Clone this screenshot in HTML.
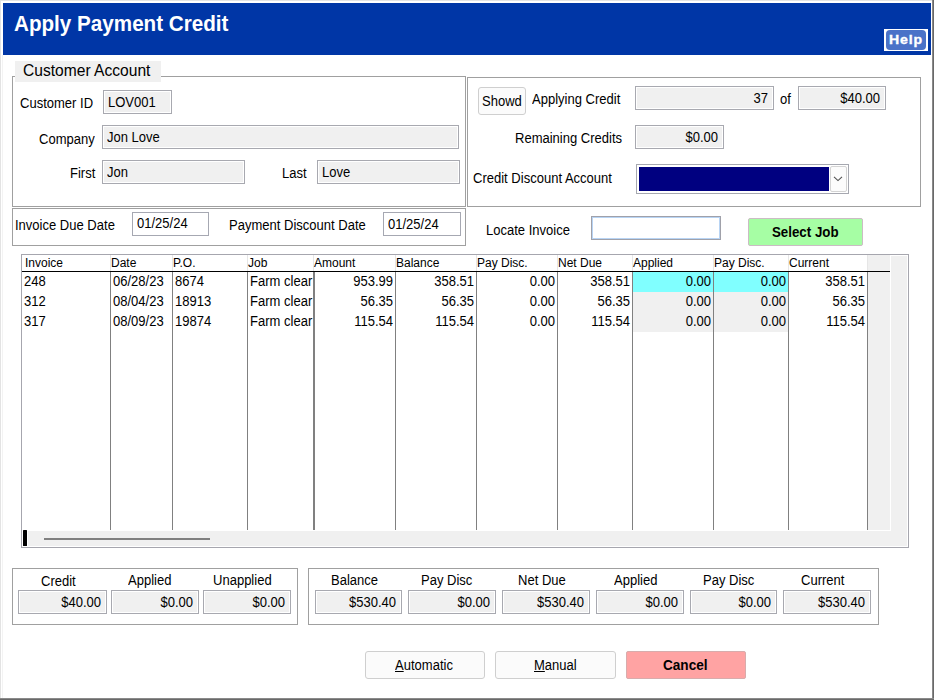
<!DOCTYPE html>
<html><head><meta charset="utf-8">
<style>
*{margin:0;padding:0;box-sizing:border-box}
html,body{width:934px;height:700px;overflow:hidden;background:#fff}
body{position:relative;font-family:"Liberation Sans",sans-serif;font-size:13px;color:#000}
.a{position:absolute}
.t{position:absolute;white-space:nowrap;line-height:15px;font-size:14px;transform:scaleX(0.93);transform-origin:0 0}
.r{text-align:right;transform-origin:100% 0}
.box{position:absolute;border:1px solid #a0a0a0}
.fld{position:absolute;background:#f0f0f0;border:1px solid #a8a9b0;box-shadow:inset 0 0 0 1px #fff}
.fw{position:absolute;background:#fff;border:1px solid #a6a8b2}
.btn{position:absolute;border:1px solid #cfcfcf;border-radius:3px;background:#fbfbfb}
.vl{position:absolute;width:1px;background:#808080}
.hl{position:absolute;width:1px;background:#d8d8d8}
.gh{position:absolute;white-space:nowrap;line-height:15px;font-size:12px}
</style></head>
<body>
<!-- outer frame -->
<div class="a" style="left:0;top:0;width:934px;height:1px;background:#e3e3e3"></div>
<div class="a" style="left:0;top:0;width:1px;height:700px;background:#e3e3e3"></div>
<div class="a" style="left:2px;top:55px;width:1px;height:643px;background:#f3f3f3"></div>
<div class="a" style="left:932px;top:0;width:1px;height:700px;background:#8a8a8a"></div>
<div class="a" style="left:933px;top:0;width:1px;height:700px;background:#696969"></div>
<div class="a" style="left:0;top:698px;width:934px;height:1px;background:#8a8a8a"></div>
<div class="a" style="left:0;top:699px;width:934px;height:1px;background:#696969"></div>

<!-- header -->
<div class="a" style="left:3px;top:3px;width:928px;height:52px;background:#0036a6"></div>
<div class="a" style="left:14px;top:11.6px;font-size:21.5px;font-weight:bold;color:#fff;line-height:24px;white-space:nowrap;transform:scaleX(0.96);transform-origin:0 0">Apply Payment Credit</div>
<div class="a" style="left:884px;top:29px;width:44px;height:22px;background:#fff"></div>
<div class="a" style="left:886px;top:30px;width:40px;height:20px;background:#4a72c8;border-radius:4px"></div>
<div class="t" style="left:888.5px;top:31.6px;font-weight:bold;color:#fff;letter-spacing:0.8px;font-size:13px;-webkit-text-stroke:0.35px #fff;transform:scaleX(1.08)">Help</div>

<!-- customer account group -->
<div class="box" style="left:12px;top:76px;width:454px;height:131px"></div>
<div class="a" style="left:15px;top:61px;width:146px;height:21px;background:#f0f0f0"></div>
<div class="t" style="left:23px;top:61px;font-size:16.5px;line-height:18px;transform:scaleX(0.945)">Customer Account</div>

<div class="t" style="left:20px;top:96px">Customer ID</div>
<div class="fld" style="left:103px;top:90px;width:69px;height:24px"></div>
<div class="t" style="left:108px;top:95px">LOV001</div>

<div class="t" style="left:39px;top:132px">Company</div>
<div class="fld" style="left:102px;top:125px;width:357px;height:24px"></div>
<div class="t" style="left:107px;top:130px">Jon Love</div>

<div class="t" style="left:70px;top:166px">First</div>
<div class="fld" style="left:102px;top:160px;width:143px;height:24px"></div>
<div class="t" style="left:107px;top:165px">Jon</div>

<div class="t" style="left:282px;top:166px">Last</div>
<div class="fld" style="left:317px;top:160px;width:143px;height:24px"></div>
<div class="t" style="left:322px;top:165px">Love</div>

<!-- dates group -->
<div class="box" style="left:12px;top:208px;width:454px;height:38px"></div>
<div class="t" style="left:15px;top:218px">Invoice Due Date</div>
<div class="fw" style="left:132px;top:212px;width:77px;height:24px"></div>
<div class="t" style="left:137px;top:216px">01/25/24</div>
<div class="t" style="left:229px;top:218px">Payment Discount Date</div>
<div class="fw" style="left:383px;top:212px;width:78px;height:24px"></div>
<div class="t" style="left:388px;top:217px">01/25/24</div>

<!-- right group -->
<div class="box" style="left:467px;top:77px;width:454px;height:130px"></div>
<div class="btn" style="left:478px;top:87px;width:48px;height:28px"></div>
<div class="t" style="left:482px;top:94px">Showd</div>
<div class="t" style="left:532px;top:92px">Applying Credit</div>
<div class="fld" style="left:635px;top:86px;width:139px;height:24px"></div>
<div class="t r" style="left:640px;top:91px;width:128px">37</div>
<div class="t" style="left:780px;top:92px">of</div>
<div class="fld" style="left:798px;top:86px;width:88px;height:24px"></div>
<div class="t r" style="left:800px;top:91px;width:80px">$40.00</div>
<div class="t" style="left:515px;top:131px">Remaining Credits</div>
<div class="fld" style="left:635px;top:125px;width:89px;height:24px"></div>
<div class="t r" style="left:640px;top:130px;width:78px">$0.00</div>
<div class="t" style="left:473px;top:171px">Credit Discount Account</div>
<div class="a" style="left:636px;top:164px;width:213px;height:30px;border:1px solid #a6a8b0;background:#fff"></div>
<div class="a" style="left:639px;top:167px;width:190px;height:24px;background:#000080"></div>
<div class="a" style="left:830px;top:166px;width:17px;height:26px;border:1px solid #d4d4d4;border-radius:2px;background:#fcfcfc"></div>
<svg class="a" style="left:833px;top:175px" width="11" height="8" viewBox="0 0 11 8"><path d="M1 1.8 L5 5.6 L9 1.8" fill="none" stroke="#505050" stroke-width="1.1"/></svg>

<!-- locate -->
<div class="t" style="left:486px;top:223px">Locate Invoice</div>
<div class="a" style="left:591px;top:216px;width:130px;height:24px;border:1px solid #a0a1aa;background:#fff"></div>
<div class="a" style="left:592px;top:217px;width:128px;height:22px;border:1px solid #b8d4f4"></div>
<div class="a" style="left:748px;top:218px;width:115px;height:28px;border:1px solid #cbbcc4;border-radius:2px;background:#a6fea4"></div>
<div class="t" style="left:772px;top:225px;font-weight:bold;font-size:14px;transform:scaleX(0.95)">Select Job</div>

<!-- grid -->
<div class="a" style="left:21px;top:254px;width:888px;height:294px;border:1px solid #a6a6ae;background:#fff"></div>
<div class="a" style="left:867px;top:255px;width:23px;height:275px;background:#f0f0f0"></div>
<div class="a" style="left:891px;top:256px;width:16px;height:290px;background:#f0f0f0"></div>
<div class="a" style="left:28px;top:531px;width:879px;height:15px;background:#f0f0f0"></div>
<div class="a" style="left:23px;top:530px;width:4px;height:16px;background:#000;border-radius:0.5px"></div>
<div class="a" style="left:44px;top:538px;width:166px;height:2px;background:#808080"></div>
<div class="a" style="left:633px;top:272px;width:80px;height:20px;background:#80ffff"></div>
<div class="a" style="left:633px;top:292px;width:80px;height:40px;background:#f0f0f0"></div>
<div class="a" style="left:714px;top:272px;width:74px;height:20px;background:#80ffff"></div>
<div class="a" style="left:714px;top:292px;width:74px;height:40px;background:#f0f0f0"></div>
<div class="a" style="left:110px;top:255px;width:1px;height:16px;background:#e6e6e6"></div>
<div class="a" style="left:172px;top:255px;width:1px;height:16px;background:#e6e6e6"></div>
<div class="a" style="left:247px;top:255px;width:1px;height:16px;background:#e6e6e6"></div>
<div class="a" style="left:313px;top:255px;width:1px;height:16px;background:#e6e6e6"></div>
<div class="a" style="left:395px;top:255px;width:1px;height:16px;background:#e6e6e6"></div>
<div class="a" style="left:476px;top:255px;width:1px;height:16px;background:#e6e6e6"></div>
<div class="a" style="left:557px;top:255px;width:1px;height:16px;background:#e6e6e6"></div>
<div class="a" style="left:632px;top:255px;width:1px;height:16px;background:#e6e6e6"></div>
<div class="a" style="left:713px;top:255px;width:1px;height:16px;background:#e6e6e6"></div>
<div class="a" style="left:788px;top:255px;width:1px;height:16px;background:#e6e6e6"></div>
<div class="a" style="left:867px;top:255px;width:1px;height:16px;background:#e6e6e6"></div>
<div class="a" style="left:22px;top:271px;width:868px;height:1px;background:#000"></div>
<div class="a" style="left:110px;top:272px;width:1px;height:258px;background:#808080"></div>
<div class="a" style="left:172px;top:272px;width:1px;height:258px;background:#808080"></div>
<div class="a" style="left:247px;top:272px;width:1px;height:258px;background:#808080"></div>
<div class="a" style="left:313px;top:272px;width:2px;height:258px;background:#808080"></div>
<div class="a" style="left:395px;top:272px;width:1px;height:258px;background:#808080"></div>
<div class="a" style="left:476px;top:272px;width:1px;height:258px;background:#808080"></div>
<div class="a" style="left:557px;top:272px;width:1px;height:258px;background:#808080"></div>
<div class="a" style="left:632px;top:272px;width:1px;height:258px;background:#808080"></div>
<div class="a" style="left:713px;top:272px;width:1px;height:258px;background:#808080"></div>
<div class="a" style="left:788px;top:272px;width:1px;height:258px;background:#808080"></div>
<div class="a" style="left:867px;top:272px;width:1px;height:258px;background:#808080"></div>
<div class="gh" style="left:25px;top:256px">Invoice</div>
<div class="gh" style="left:111px;top:256px">Date</div>
<div class="gh" style="left:173px;top:256px">P.O.</div>
<div class="gh" style="left:248px;top:256px">Job</div>
<div class="gh" style="left:314px;top:256px">Amount</div>
<div class="gh" style="left:396px;top:256px">Balance</div>
<div class="gh" style="left:477px;top:256px">Pay Disc.</div>
<div class="gh" style="left:558px;top:256px">Net Due</div>
<div class="gh" style="left:633px;top:256px">Applied</div>
<div class="gh" style="left:714px;top:256px">Pay Disc.</div>
<div class="gh" style="left:789px;top:256px">Current</div>
<div class="t" style="left:24px;top:274px">248</div>
<div class="t" style="left:113px;top:274px">06/28/23</div>
<div class="t" style="left:175px;top:274px">8674</div>
<div class="t" style="left:250px;top:274px;width:67.7px;overflow:hidden">Farm clear</div>
<div class="t r" style="left:314px;top:274px;width:79px">953.99</div>
<div class="t r" style="left:396px;top:274px;width:78px">358.51</div>
<div class="t r" style="left:477px;top:274px;width:78px">0.00</div>
<div class="t r" style="left:558px;top:274px;width:72px">358.51</div>
<div class="t r" style="left:633px;top:274px;width:78px">0.00</div>
<div class="t r" style="left:714px;top:274px;width:72px">0.00</div>
<div class="t r" style="left:789px;top:274px;width:76px">358.51</div>
<div class="t" style="left:24px;top:294px">312</div>
<div class="t" style="left:113px;top:294px">08/04/23</div>
<div class="t" style="left:175px;top:294px">18913</div>
<div class="t" style="left:250px;top:294px;width:67.7px;overflow:hidden">Farm clear</div>
<div class="t r" style="left:314px;top:294px;width:79px">56.35</div>
<div class="t r" style="left:396px;top:294px;width:78px">56.35</div>
<div class="t r" style="left:477px;top:294px;width:78px">0.00</div>
<div class="t r" style="left:558px;top:294px;width:72px">56.35</div>
<div class="t r" style="left:633px;top:294px;width:78px">0.00</div>
<div class="t r" style="left:714px;top:294px;width:72px">0.00</div>
<div class="t r" style="left:789px;top:294px;width:76px">56.35</div>
<div class="t" style="left:24px;top:314px">317</div>
<div class="t" style="left:113px;top:314px">08/09/23</div>
<div class="t" style="left:175px;top:314px">19874</div>
<div class="t" style="left:250px;top:314px;width:67.7px;overflow:hidden">Farm clear</div>
<div class="t r" style="left:314px;top:314px;width:79px">115.54</div>
<div class="t r" style="left:396px;top:314px;width:78px">115.54</div>
<div class="t r" style="left:477px;top:314px;width:78px">0.00</div>
<div class="t r" style="left:558px;top:314px;width:72px">115.54</div>
<div class="t r" style="left:633px;top:314px;width:78px">0.00</div>
<div class="t r" style="left:714px;top:314px;width:72px">0.00</div>
<div class="t r" style="left:789px;top:314px;width:76px">115.54</div>
<!-- totals -->
<div class="box" style="left:12px;top:568px;width:286px;height:57px"></div>
<div class="box" style="left:308px;top:568px;width:571px;height:57px"></div>
<div class="t" style="left:41px;top:574px">Credit</div>
<div class="fld" style="left:18px;top:590px;width:89px;height:24px"></div>
<div class="t r" style="left:18px;top:595px;width:83px">$40.00</div>
<div class="t" style="left:128px;top:573px">Applied</div>
<div class="fld" style="left:111px;top:590px;width:88px;height:24px"></div>
<div class="t r" style="left:111px;top:595px;width:82px">$0.00</div>
<div class="t" style="left:213px;top:573px">Unapplied</div>
<div class="fld" style="left:203px;top:590px;width:88px;height:24px"></div>
<div class="t r" style="left:203px;top:595px;width:82px">$0.00</div>
<div class="t" style="left:331px;top:573px">Balance</div>
<div class="fld" style="left:315px;top:590px;width:87px;height:24px"></div>
<div class="t r" style="left:315px;top:595px;width:81px">$530.40</div>
<div class="t" style="left:421px;top:573px">Pay Disc</div>
<div class="fld" style="left:408px;top:590px;width:88px;height:24px"></div>
<div class="t r" style="left:408px;top:595px;width:82px">$0.00</div>
<div class="t" style="left:518px;top:573px">Net Due</div>
<div class="fld" style="left:502px;top:590px;width:88px;height:24px"></div>
<div class="t r" style="left:502px;top:595px;width:82px">$530.40</div>
<div class="t" style="left:614px;top:573px">Applied</div>
<div class="fld" style="left:596px;top:590px;width:88px;height:24px"></div>
<div class="t r" style="left:596px;top:595px;width:82px">$0.00</div>
<div class="t" style="left:703px;top:573px">Pay Disc</div>
<div class="fld" style="left:690px;top:590px;width:87px;height:24px"></div>
<div class="t r" style="left:690px;top:595px;width:81px">$0.00</div>
<div class="t" style="left:801px;top:573px">Current</div>
<div class="fld" style="left:783px;top:590px;width:88px;height:24px"></div>
<div class="t r" style="left:783px;top:595px;width:82px">$530.40</div>
<!-- buttons -->
<div class="btn" style="left:365px;top:651px;width:120px;height:28px"></div>
<div class="t" style="left:395px;top:658px"><u>A</u>utomatic</div>
<div class="btn" style="left:495px;top:651px;width:121px;height:28px"></div>
<div class="t" style="left:534px;top:658px"><u>M</u>anual</div>
<div class="btn" style="left:626px;top:651px;width:120px;height:28px;background:#ffa3a3;border-color:#d8acac;border-radius:2px"></div>
<div class="t" style="left:663px;top:658px;font-weight:bold;transform:scaleX(0.97)">Cancel</div>
</body></html>
